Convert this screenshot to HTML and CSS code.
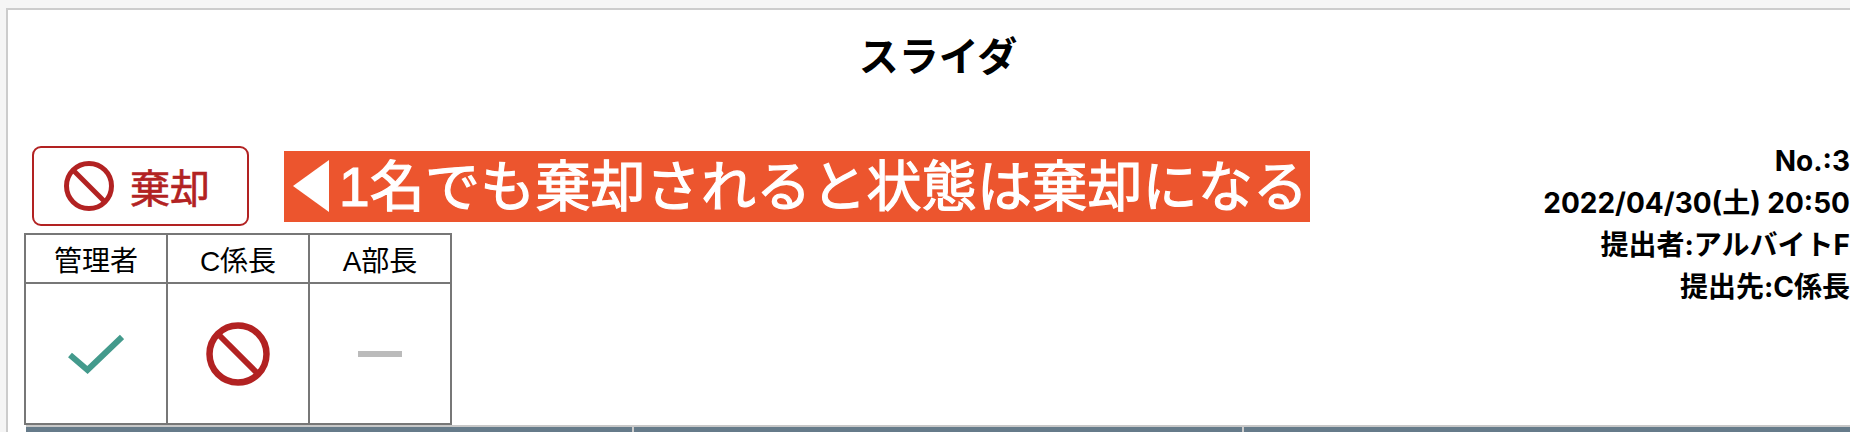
FILE: index.html
```html
<!DOCTYPE html>
<html lang="ja">
<head>
    <meta charset="UTF-8">
    <meta name="viewport" content="width=device-width, initial-scale=1.0">
    <title>スライダ</title>
    <link rel="stylesheet" href="styles.css">
</head>
<body>
    <div class="panel">
        <h2 class="title">スライダ</h2>

        <div class="main">
            <div class="left">
                <div class="actions">
                    <button class="reject-btn">
                        <svg class="icon-ban-small" viewBox="0 0 50 50">
                            <circle cx="25" cy="25" r="22.5" fill="none" stroke="#b22222" stroke-width="5"/>
                            <line x1="9" y1="9" x2="41" y2="41" stroke="#b22222" stroke-width="5"/>
                        </svg>
                        <span>棄却</span>
                    </button>
                    <div class="note"><svg class="icon-arrow" viewBox="0 0 36 52"><polygon points="0,26 36,0 36,52" fill="#fff"/></svg><span>1名でも棄却されると状態は棄却になる</span></div>
                </div>

                <table class="stamps">
                    <tr>
                        <th>管理者</th>
                        <th>C係長</th>
                        <th>A部長</th>
                    </tr>
                    <tr>
                        <td>
                            <svg class="icon-check" viewBox="0 0 56 42">
                                <polyline points="2,22 19.500,37 54,4" fill="none" stroke="#439a8c" stroke-width="6"/>
                            </svg>
                        </td>
                        <td>
                            <svg class="icon-ban" viewBox="0 0 64 64">
                                <circle cx="32" cy="32" r="28.500" fill="none" stroke="#b22222" stroke-width="6.500"/>
                                <line x1="13" y1="13" x2="51" y2="51" stroke="#b22222" stroke-width="6"/>
                            </svg>
                        </td>
                        <td><div class="dash"></div></td>
                    </tr>
                </table>
            </div>

            <div class="info">
                <div>No.:3</div>
                <div>2022/04/30(土) 20:50</div>
                <div>提出者:アルバイトF</div>
                <div>提出先:C係長</div>
            </div>
        </div>

        <div class="bar">
            <div class="bar-cell"></div>
            <div class="bar-cell"></div>
            <div class="bar-cell"></div>
        </div>
    </div>
</body>
</html>
```

FILE: styles.css
```css
html, body {
    height: 432px;
    overflow: hidden;
}
body {
    margin: 0;
    background: #f5f5f5;
    color: #000;
    font-family: "Liberation Sans", "Noto Sans CJK JP", sans-serif;
}
.panel {
    box-sizing: border-box;
    width: 1864px;
    height: 424px;
    overflow: hidden;
    margin: 8px 0 0 6px;
    background: #fff;
    border: 2px solid #ccc;
    border-bottom: none;
}
.title {
    margin: 0;
    padding-top: 19px;
    font-size: 40px;
    line-height: 56px;
    font-weight: bold;
    text-align: center;
}
.main {
    display: flex;
    justify-content: space-between;
    margin-top: 55px;
    padding: 0 18px 0 16px;
}
.left {
    padding-top: 6px;
}
.actions {
    display: flex;
    align-items: center;
    margin-left: 8px;
}
.reject-btn {
    box-sizing: border-box;
    display: flex;
    align-items: center;
    gap: 16px;
    width: 217px;
    height: 80px;
    padding: 0 0 0 30px;
    background: #fff;
    border: 2px solid #b22222;
    border-radius: 9px;
    color: #b22222;
    font-family: inherit;
    font-size: 40px;
    -webkit-text-stroke: 0.6px #b22222;
}
.icon-ban-small {
    width: 50px;
    height: 50px;
}
.note {
    display: flex;
    align-items: center;
    gap: 9px;
    box-sizing: border-box;
    margin-left: 35px;
    width: 1026px;
    height: 71px;
    padding: 2px 0 0 8px;
    background: #ec552e;
    color: #fff;
    font-size: 55px;
    letter-spacing: 0.2px;
    line-height: 69px;
    white-space: nowrap;
    -webkit-text-stroke: 1.2px #fff;
}
.icon-arrow {
    width: 38px;
    height: 52px;
    flex: none;
    margin-top: -2px;
}
.stamps {
    margin-top: 7px;
    border-collapse: collapse;
    table-layout: fixed;
    width: 428px;
}
.stamps th, .stamps td {
    padding: 0;
    border: 2px solid #777;
    text-align: center;
}
.stamps th {
    height: 47px;
    font-size: 28px;
    font-weight: normal;
}
.stamps td {
    height: 139px;
}
.icon-check {
    display: block;
    width: 56px;
    height: 42px;
    margin: 0 auto;
}
.icon-ban {
    display: block;
    width: 64px;
    height: 64px;
    margin: 0 auto;
}
.dash {
    width: 44px;
    height: 6px;
    margin: 0 auto;
    background: #bbb;
}
.info {
    font-family: Inter, "Noto Sans CJK JP", sans-serif;
    font-size: 28px;
    font-weight: bold;
    line-height: 42px;
    text-align: right;
}
.bar {
    display: grid;
    grid-template-columns: 606px 608px 1fr;
    gap: 2px;
    margin: 0 0 0 18px;
    background: #ccc;
    border-top: 2px solid #c8c8c8;
}
.bar-cell {
    height: 40px;
    background: #667b8a;
}
```
